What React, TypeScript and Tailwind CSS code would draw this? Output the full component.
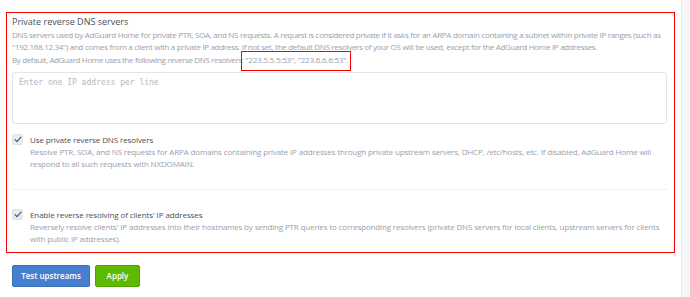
import React from "react";

function Check() {
  return (
    <div className="w-[11px] h-[11px] rounded-[2px] bg-[#e9ecef] border border-[#dfe3e8] flex items-center justify-center shrink-0">
      <svg width="8" height="7" viewBox="0 0 8 7" fill="none">
        <path d="M1 3.6 L3 5.6 L7 1.2" stroke="#495057" strokeWidth="1.1" strokeLinecap="round" strokeLinejoin="round" />
      </svg>
    </div>
  );
}

export default function App() {
  return (
    <div className="w-[690px] h-[297px] bg-white flex font-['Open_Sans',sans-serif] overflow-hidden">
      <div className="w-[681px] flex flex-col">
        <div className="mt-[12px] ml-[6px] w-[669px] border-[1.5px] border-[#ff0000] px-[5px] pt-[3px] pb-[7px]">
          <div className="text-[9px] leading-[12px] text-[#495057]">Private reverse DNS servers</div>
          <div className="mt-[1px] text-[8px] leading-[12px] text-[#9aa0ac] tracking-[-0.3px]">
            DNS servers used by AdGuard Home for private PTR, SOA, and NS requests. A request is considered private if it asks for an ARPA domain containing a subnet within private IP ranges (such as
            <br />
            "192.168.12.34") and comes from a client with a private IP address. If not set, the default DNS resolvers of your OS will be used, except for the AdGuard Home IP addresses.
          </div>
          <div className="mt-[1px] text-[8px] leading-[12px] text-[#9aa0ac] tracking-[-0.36px]">
            By default, AdGuard Home uses the following reverse DNS resolvers:{" "}
            <span className="relative tracking-[-0.2px]">
              "223.5.5.5:53", "223.6.6.6:53".
              <span className="absolute left-[-4px] right-[-3px] top-[-3px] bottom-[-6px] border-[1.5px] border-[#ff0000]"></span>
            </span>
          </div>
          <div className="mt-[6px] mr-[2px] h-[52px] border border-[#e0e5ec] rounded-[3px] px-[6px] pt-[4px] font-['DejaVu_Sans_Mono',monospace] text-[8px] text-[#b4b9c0]">
            Enter one IP address per line
          </div>
          <div className="mt-[10px] flex gap-[7px]">
            <Check />
            <div>
              <div className="text-[8px] leading-[12px] text-[#495057] tracking-[-0.1px]">Use private reverse DNS resolvers</div>
              <div className="text-[8px] leading-[12px] text-[#9aa0ac] tracking-[-0.15px]">
                Resolve PTR, SOA, and NS requests for ARPA domains containing private IP addresses through private upstream servers, DHCP, /etc/hosts, etc. If disabled, AdGuard Home will
                <br />
                respond to all such requests with NXDOMAIN.
              </div>
            </div>
          </div>
          <div className="mt-[19px] mr-[2px] h-[1px] bg-[#eef0f4]"></div>
          <div className="mt-[19px] flex gap-[7px]">
            <Check />
            <div>
              <div className="text-[8px] leading-[12px] text-[#495057] tracking-[-0.1px]">Enable reverse resolving of clients' IP addresses</div>
              <div className="text-[8px] leading-[12px] text-[#9aa0ac] tracking-[-0.15px]">
                Reversely resolve clients' IP addresses into their hostnames by sending PTR queries to corresponding resolvers (private DNS servers for local clients, upstream servers for clients
                <br />
                with public IP addresses).
              </div>
            </div>
          </div>
        </div>
        <div className="mt-[12px] ml-[12px] flex gap-[5px]">
          <button className="h-[22px] w-[78px] rounded-[2px] bg-[#467fcf] border border-[#3a6fb8] text-white text-[8px] font-semibold">Test upstreams</button>
          <button className="h-[22px] w-[45px] rounded-[2px] bg-[#5eba00] border border-[#52a300] text-white text-[8px] font-semibold">Apply</button>
        </div>
      </div>
      <div className="w-[9px] border-l border-[#e6e9ef] bg-[#f5f7fb]"></div>
    </div>
  );
}
